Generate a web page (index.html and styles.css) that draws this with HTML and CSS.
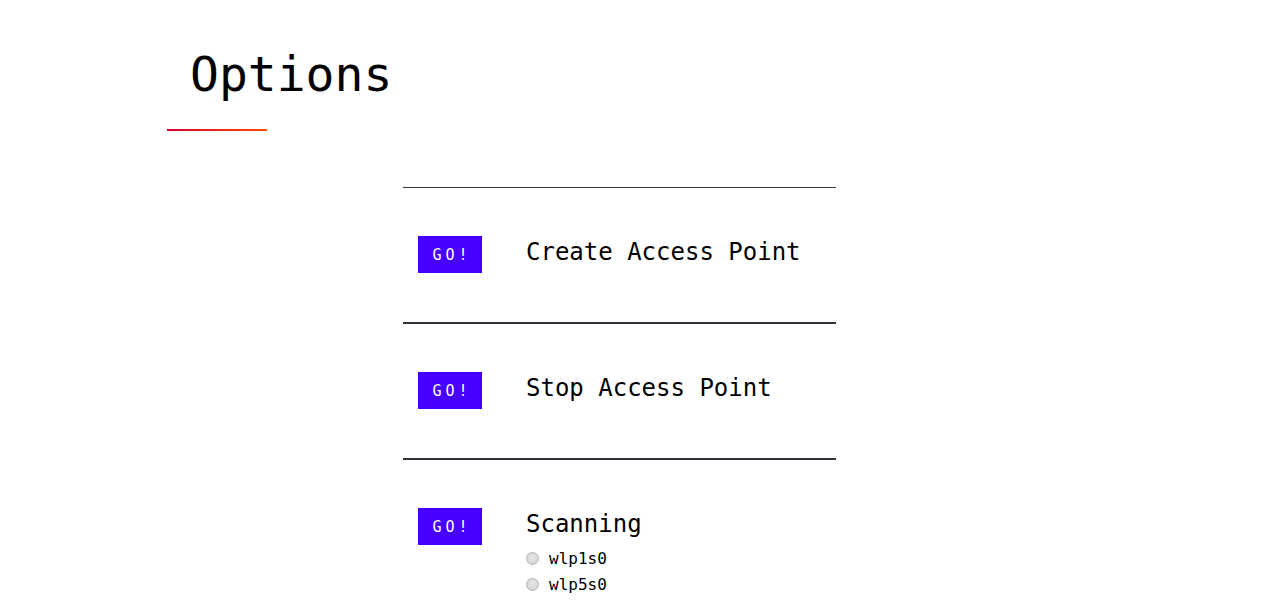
FILE: index.html
```html
<!DOCTYPE html>
<html>
<head>
<meta charset="utf-8">
<title>Options</title>
<link rel="stylesheet" href="styles.css">
</head>
<body>
<header class="header">
  <h1 class="title">Options</h1>
  <div class="accent"></div>
</header>
<main class="list">
  <section class="row">
    <button class="go">GO!</button>
    <div class="info">
      <h2 class="label">Create Access Point</h2>
    </div>
  </section>
  <section class="row">
    <button class="go">GO!</button>
    <div class="info">
      <h2 class="label">Stop Access Point</h2>
    </div>
  </section>
  <section class="row">
    <button class="go">GO!</button>
    <div class="info">
      <h2 class="label">Scanning</h2>
      <div class="radios">
        <label class="radio"><input type="radio" name="iface"><span>wlp1s0</span></label>
        <label class="radio"><input type="radio" name="iface"><span>wlp5s0</span></label>
      </div>
    </div>
  </section>
</main>
</body>
</html>
```

FILE: styles.css
```css
html, body {
  margin: 0;
  padding: 0;
  background: #ffffff;
  color: #000000;
  font-family: "DejaVu Sans Mono", "Liberation Mono", monospace;
}

.header {
  padding: 46px 0 0 167px;
}

.title {
  margin: 0 0 0 23px;
  font-size: 48px;
  font-weight: 400;
  line-height: 57.6px;
}

.accent {
  width: 100px;
  height: 2px;
  margin-top: 25px;
  background: linear-gradient(to right, #dc0030, #ff4a00);
}

.list {
  width: 433px;
  margin: 56px 0 0 403px;
  border-top: 1px solid #34323e;
}

.row {
  display: flex;
  align-items: flex-start;
  gap: 44px;
  padding: 48px 0 49px 15px;
  border-bottom: 2px solid #34323e;
}

.go {
  flex: none;
  box-sizing: border-box;
  width: 64px;
  height: 37px;
  padding: 2px 0 0 4px;
  border: 0;
  border-radius: 0;
  background: #4700ff;
  color: #ffffff;
  font-family: "DejaVu Sans Mono", "Liberation Mono", monospace;
  font-size: 15px;
  letter-spacing: 4px;
  line-height: 35px;
  text-align: center;
}

.info {
  display: flex;
  flex-direction: column;
  padding-top: 2px;
}

.label {
  margin: 0;
  font-size: 24px;
  font-weight: 400;
  line-height: 28.8px;
}

.radios {
  display: flex;
  flex-direction: column;
  margin-top: 7px;
}

.radio {
  display: flex;
  align-items: center;
  height: 26px;
  font-size: 16px;
}

.radio input {
  appearance: none;
  -webkit-appearance: none;
  box-sizing: border-box;
  margin: 1px 10px 0 0;
  width: 13px;
  height: 13px;
  border: 1px solid #b4b4b4;
  border-radius: 50%;
  background: radial-gradient(circle at 50% 40%, #e6e6e6, #d2d2d2);
}
```
